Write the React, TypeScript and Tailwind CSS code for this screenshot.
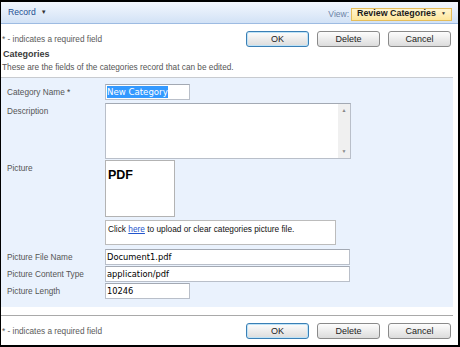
import { ReactNode } from 'react';

const sans = { fontFamily: '"Liberation Sans", Arial, sans-serif' };
const verdana = { fontFamily: '"DejaVu Sans", Verdana, sans-serif' };

const Button = ({ label, focused }: { label: string; focused?: boolean }) => (
	<button
		type="button"
		className={
			focused
				? 'w-[63px] h-[16px] rounded-[3px] border border-[#3a7fb5] bg-gradient-to-b from-[#fdfdfd] to-[#dcdcdc] text-[9px] leading-none text-[#222] shadow-[inset_0_0_0_1px_#bfe3f7]'
				: 'w-[63px] h-[16px] rounded-[3px] border border-[#8a8a8a] bg-gradient-to-b from-[#fdfdfd] to-[#dcdcdc] text-[9px] leading-none text-[#222]'
		}
	>
		{label}
	</button>
);

const ActionRow = () => (
	<div className="flex items-center justify-between h-[16px] pr-[7px]">
		<span className="pl-[1px] text-[8.25px] leading-[11px] text-[#5a5a5a]">
			* - indicates a required field
		</span>
		<div className="flex gap-[8px]">
			<Button label="OK" focused />
			<Button label="Delete" />
			<Button label="Cancel" />
		</div>
	</div>
);

const Field = ({
	label,
	pt = 'pt-[3px]',
	children
}: {
	label: ReactNode;
	pt?: string;
	children: ReactNode;
}) => (
	<div className="flex items-start">
		<div
			className={`w-[104px] shrink-0 pl-[6px] text-[8.25px] leading-[11px] text-[#555] ${pt}`}
		>
			{label}
		</div>
		{children}
	</div>
);

const TextBox = ({ value, width }: { value: string; width: string }) => (
	<div
		className={`${width} h-[16px] bg-white border border-[#b9bfc9] border-t-[#a3a9b3] flex items-center pl-[1px] text-[8.3px] text-black`}
		style={verdana}
	>
		{value}
	</div>
);

const App = () => {
	return (
		<div
			className="w-[460px] h-[347px] bg-white border-t-2 border-r-2 border-b-2 border-l border-black flex flex-col overflow-hidden"
			style={sans}
		>
			{/* toolbar */}
			<div className="h-[22px] shrink-0 flex items-center justify-between pl-[7px] pr-[6px] bg-gradient-to-b from-[#f3f7fd] to-[#d2e2f6] border-b border-[#9dbbe2]">
				<div className="flex items-center gap-[5px] text-[8.6px] text-[#1d4f91]">
					<span>Record</span>
					<span className="text-[6px] text-[#333]">▼</span>
				</div>
				<div className="flex items-center gap-[2px] mt-[3px]">
					<span className="text-[8.5px] text-[#6b83a6]">View:</span>
					<div className="w-[101px] h-[13px] flex items-center justify-between pl-[5px] pr-[5px] border border-[#e5bd5a] bg-gradient-to-b from-[#fff5cf] to-[#fde69a]">
						<span className="text-[8.9px] font-bold text-[#1a1a1a]">
							Review Categories
						</span>
						<span className="text-[5px] text-[#333]">▼</span>
					</div>
				</div>
			</div>

			<div className="pt-[7px]">
				<ActionRow />
			</div>

			<div className="mt-[2px] pl-[2px] text-[9px] leading-[11px] font-bold text-[#3b3b3b]">
				Categories
			</div>
			<div className="mt-[2px] pl-[1px] text-[8.25px] leading-[11px] text-[#555]">
				These are the fields of the categories record that can be edited.
			</div>

			{/* form panel */}
			<div className="mt-[4px] mr-[5px] border-t border-[#c8cbd0] bg-[#eaf2fd] pt-[6px] pb-[8px] flex flex-col">
				<Field
					label={
						<span>
							Category Name <span className="text-[#444]">*</span>
						</span>
					}
				>
					<div
						className="w-[85px] h-[16px] bg-white border border-[#b9bfc9] border-t-[#a3a9b3] flex items-center pl-[1px] text-[8.6px]"
						style={verdana}
					>
						<span className="bg-[#3399ff] text-white leading-[12px]">
							New Category
						</span>
					</div>
				</Field>

				<div className="mt-[3px]">
					<Field label="Description" pt="pt-[3px]">
						<div className="w-[246px] h-[56px] bg-white border border-[#b9bfc9] border-t-[#a3a9b3] flex justify-end">
							<div className="w-[12px] bg-[#f0f0f0] flex flex-col justify-between items-center text-[5px] text-[#888] py-[3px]">
								<span>▲</span>
								<span>▼</span>
							</div>
						</div>
					</Field>
				</div>

				<div className="mt-[1px]">
					<Field label="Picture" pt="pt-[3px]">
						<div className="w-[70px] h-[57px] bg-white border border-[#b3b3b3] pl-[2px] pt-[1px]">
							<span className="text-[12.5px] leading-[13px] font-bold text-black">
								PDF
							</span>
						</div>
					</Field>
				</div>

				<div className="mt-[3px] flex">
					<div className="w-[104px] shrink-0" />
					<div className="w-[231px] h-[25px] bg-white border border-[#bcbcbc] pl-[2px] pt-[3px] text-[8.3px] leading-[11px] text-[#111]">
						Click{' '}
						<a href="#" className="text-[#2255cc] underline">
							here
						</a>{' '}
						to upload or clear categories picture file.
					</div>
				</div>

				<div className="mt-[4px] flex flex-col gap-[1px]">
					<Field label="Picture File Name" pt="pt-[3px]">
						<TextBox value="Document1.pdf" width="w-[245px]" />
					</Field>
					<Field label="Picture Content Type" pt="pt-[3px]">
						<TextBox value="application/pdf" width="w-[245px]" />
					</Field>
					<Field label="Picture Length" pt="pt-[3px]">
						<TextBox value="10246" width="w-[85px]" />
					</Field>
				</div>
			</div>

			<div className="mt-[8px] mr-[5px] border-t border-[#a9a9a9]" />
			<div className="pt-[7px]">
				<ActionRow />
			</div>
		</div>
	);
};

export default App;
